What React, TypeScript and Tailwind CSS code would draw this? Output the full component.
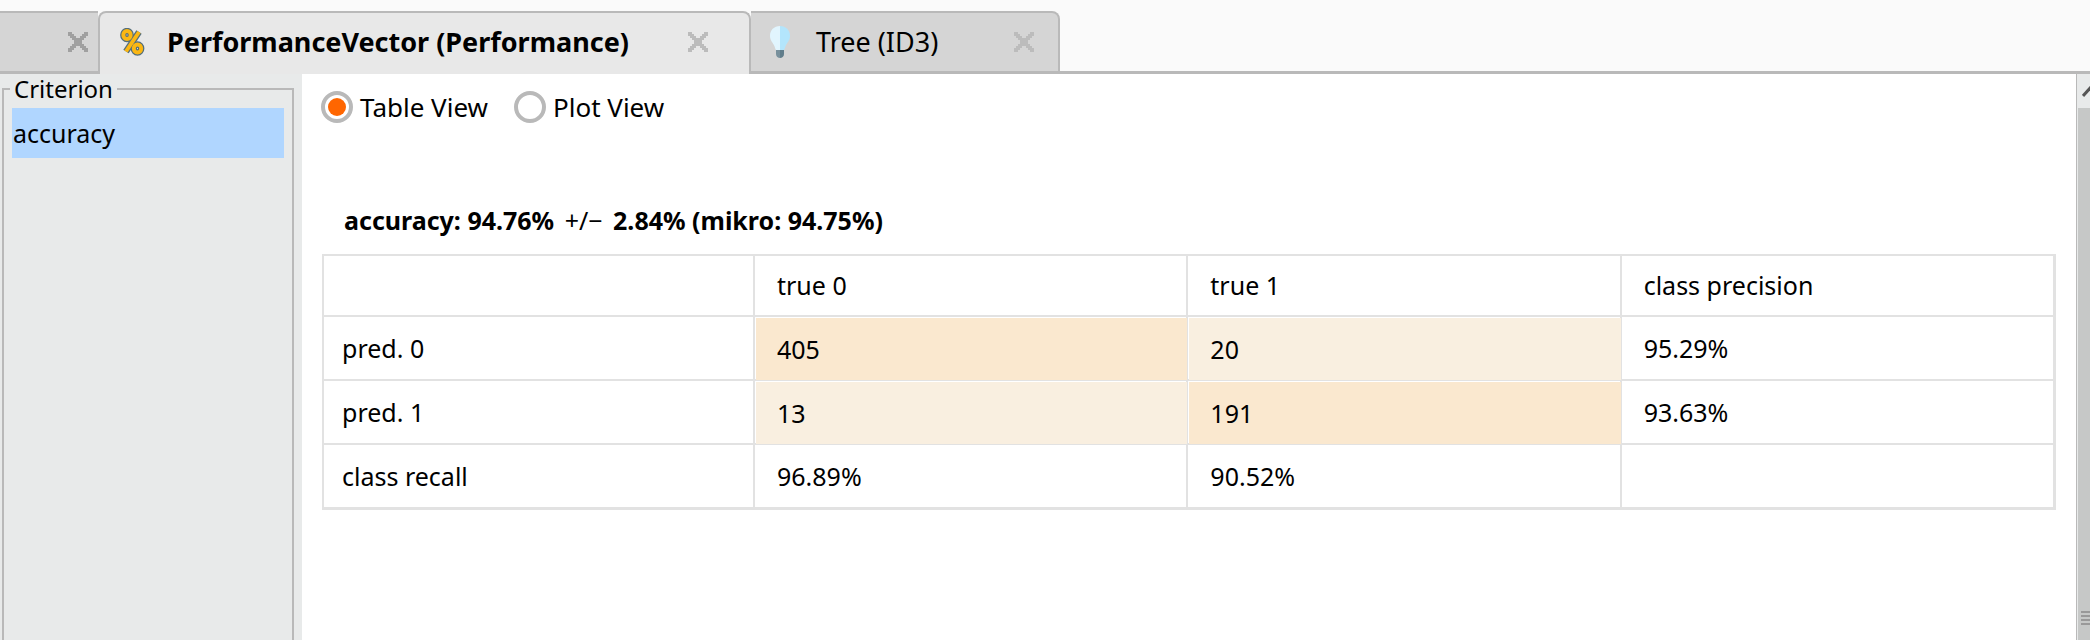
import { useState } from "react";

type Cell = { text: string; fill?: "strong" | "light" };

const rows: { label: string; cells: Cell[] }[] = [
  {
    label: "pred. 0",
    cells: [{ text: "405", fill: "strong" }, { text: "20", fill: "light" }, { text: "95.29%" }],
  },
  {
    label: "pred. 1",
    cells: [{ text: "13", fill: "light" }, { text: "191", fill: "strong" }, { text: "93.63%" }],
  },
  {
    label: "class recall",
    cells: [{ text: "96.89%" }, { text: "90.52%" }, { text: "" }],
  },
];

const fills = { strong: "bg-[#fae8cf]", light: "bg-[#f9efe0]" };

function CloseIcon() {
  return (
    <svg viewBox="0 0 20 20" className="block size-5" aria-hidden="true">
      <path
        d="M0 0h4v2h2v2h2v2h4V4h2V2h2V0h4v4h-2v2h-2v2h-2v4h2v2h2v2h2v4h-4v-2h-2v-2h-2v-2H8v2H6v2H4v2H0v-4h2v-2h2v-2h2V8H4V6H2V4H0z"
        fill="currentColor"
      />
    </svg>
  );
}

function PercentIcon() {
  const shapes = (
    <>
      <ellipse cx="7" cy="7" rx="3.700" ry="4" />
      <ellipse cx="17.500" cy="20.500" rx="3.700" ry="4" />
      <path d="M19 4 6 23.500" />
    </>
  );
  return (
    <svg viewBox="0 0 25 28" className="block h-7 w-[25px]" fill="none" aria-hidden="true">
      <g stroke="#546e7a" strokeWidth="6.400">
        {shapes}
      </g>
      <g stroke="#fbb713" strokeWidth="3.900">
        {shapes}
      </g>
    </svg>
  );
}

function BulbIcon() {
  return (
    <svg viewBox="0 0 20 32" className="block h-8 w-5" aria-hidden="true">
      <path d="M10 0C4 0 0 4.300 0 9.800c0 4.800 3 7 4.400 10.200.6 1.400.6 2.500 1.600 4h4z" fill="#e1f5fe" />
      <path d="M10 0c6 0 10 4.300 10 9.800 0 4.800-3 7-4.400 10.200-.6 1.400-.6 2.500-1.600 4h-4z" fill="#b3e5fc" />
      <path d="M6 24h4v8c-2 0-4-1.500-4-4z" fill="#78909c" />
      <path d="M10 24h4v4c0 2.500-2 4-4 4z" fill="#607d8b" />
    </svg>
  );
}

export default function App() {
  const [view, setView] = useState("table");

  return (
    <div className="flex min-h-screen flex-col bg-[#fafafa] font-['Noto_Sans',sans-serif] text-[25px] leading-8 text-black">
      <header className="flex h-[74px] pt-[11px] text-[27px]" role="tablist">
        <div className="flex w-[98px] items-center justify-end border-y-2 border-b-[3px] border-[#b9b9b9] bg-[#d5d5d5] pr-[10px]">
          <button aria-label="Close tab" className="text-[#a0a0a0]">
            <CloseIcon />
          </button>
        </div>
        <div className="flex w-[653px] items-center justify-between rounded-t-lg border-2 border-b-0 border-[#b9b9b9] bg-[#e8e8e8] pr-[41px] pb-[3px] pl-5">
          <button role="tab" aria-selected="true" className="flex items-center gap-[22px] font-bold whitespace-nowrap">
            <PercentIcon />
            PerformanceVector (Performance)
          </button>
          <button aria-label="Close PerformanceVector" className="text-[#bcbcbc]">
            <CloseIcon />
          </button>
        </div>
        <div className="flex w-[309px] items-center justify-between rounded-tr-lg border-y-2 border-r-2 border-b-[3px] border-[#b9b9b9] bg-[#d5d5d5] pr-6 pl-[19px]">
          <button role="tab" aria-selected="false" className="flex items-center gap-[26px] whitespace-nowrap">
            <BulbIcon />
            Tree (ID3)
          </button>
          <button aria-label="Close Tree" className="text-[#bcbcbc]">
            <CloseIcon />
          </button>
        </div>
        <div className="flex-1 border-b-[3px] border-[#b9b9b9]" />
      </header>

      <div className="flex flex-1">
        <aside className="flex w-[302px] shrink-0 bg-[#e8eaea] pr-2 pl-[2px]">
          <fieldset className="min-w-0 flex-1 border-2 border-b-0 border-[#b9b9b9] px-2">
            <legend className="-ml-[2px] px-1 text-2xl leading-[30px]">Criterion</legend>
            <ul className="pt-1">
              <li>
                <button className="flex h-[50px] w-full items-center bg-[#b0d6ff] px-px">accuracy</button>
              </li>
            </ul>
          </fieldset>
        </aside>

        <main className="min-w-0 flex-1 bg-white pr-5 pl-5">
          <div className="-ml-px flex h-[66px] items-center gap-[26px] text-[26px]">
            {[
              { id: "table", label: "Table View" },
              { id: "plot", label: "Plot View" },
            ].map((o) => (
              <label key={o.id} className="flex items-center gap-[7px]">
                <input
                  type="radio"
                  name="view"
                  checked={view === o.id}
                  onChange={() => setView(o.id)}
                  className="size-8 appearance-none rounded-full border-4 border-[#b9b9b9] bg-white bg-clip-content p-[3px] checked:bg-[#ff6600]"
                />
                {o.label}
              </label>
            ))}
          </div>

          <h1 className="mt-16 pl-[22px] font-bold">
            accuracy: 94.76% <span className="mx-1 font-normal">+/−</span> 2.84% (mikro: 94.75%)
          </h1>

          <table className="mt-[18px] w-full table-fixed border-separate border-spacing-0 border-r-[3px] border-b-[3px] border-[#e2e2e2] text-left">
            <thead>
              <tr className="h-[61px]">
                {["", "true 0", "true 1", "class precision"].map((h) => (
                  <th
                    key={h}
                    className="border-t-2 border-l-2 border-[#e2e2e2] px-[22px] pt-0 pb-[2px] font-normal first:w-[24.9%]"
                  >
                    {h}
                  </th>
                ))}
              </tr>
            </thead>
            <tbody>
              {rows.map((r) => (
                <tr key={r.label} className="h-16">
                  <th className="border-t-2 border-l-2 border-[#e2e2e2] px-[18px] py-0 font-normal">{r.label}</th>
                  {r.cells.map((c, i) => (
                    <td key={i} className="border-t-2 border-l-2 border-[#e2e2e2] p-0">
                      {c.fill ? (
                        <div className={`relative mt-px -mr-px -mb-px ml-px flex h-[62px] items-center px-[21px] ${fills[c.fill]}`}>
                          {c.text}
                        </div>
                      ) : (
                        <div className="px-[22px]">{c.text}</div>
                      )}
                    </td>
                  ))}
                </tr>
              ))}
            </tbody>
          </table>
        </main>

        <div className="flex w-[14px] shrink-0 flex-col overflow-hidden border-l border-[#b9b9b9] bg-[#e8eaea] pl-px">
          <button aria-label="Scroll up" className="h-[34px] shrink-0 pl-1">
            <svg viewBox="0 0 8 12" className="block h-3 w-2" fill="none" aria-hidden="true">
              <path d="M1 11 9 2" stroke="#555" strokeWidth="3" />
            </svg>
          </button>
          <div className="flex flex-1 flex-col justify-end gap-[2px] bg-[#c6c8c7] pb-[15px] pl-[3px]">
            <div className="h-[2px] bg-[#999]" />
            <div className="h-[2px] bg-[#999]" />
            <div className="h-[2px] bg-[#999]" />
            <div className="h-[2px] bg-[#999]" />
          </div>
        </div>
      </div>
    </div>
  );
}
